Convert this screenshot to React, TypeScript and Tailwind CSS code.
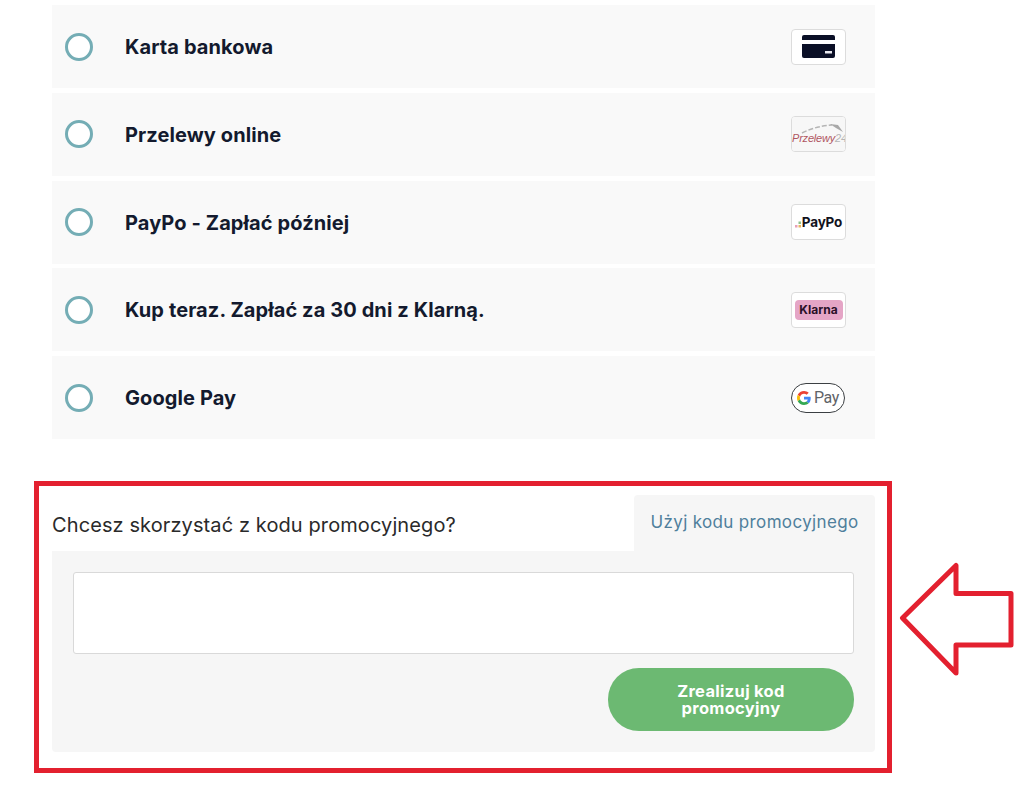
import type { ReactNode } from 'react'

const methods: { label: string; badge: ReactNode }[] = [
  { label: 'Karta bankowa', badge: <CardBadge /> },
  { label: 'Przelewy online', badge: <P24Badge /> },
  { label: 'PayPo - Zapłać później', badge: <PayPoBadge /> },
  { label: 'Kup teraz. Zapłać za 30 dni z Klarną.', badge: <KlarnaBadge /> },
  { label: 'Google Pay', badge: <GPayBadge /> },
]

function BadgeBox({ children }: { children: ReactNode }) {
  return (
    <div className="flex h-[36px] w-[55px] items-center justify-center overflow-hidden rounded-[4px] border border-[#dcdcdc] bg-white">
      {children}
    </div>
  )
}

function CardBadge() {
  return (
    <BadgeBox>
      <svg width="33" height="23" viewBox="0 0 33 23">
        <path d="M2 0h29a2 2 0 0 1 2 2v3H0V2a2 2 0 0 1 2-2z" fill="#0a0f26" />
        <path d="M0 9h33v12a2 2 0 0 1-2 2H2a2 2 0 0 1-2-2z" fill="#0a0f26" />
        <rect x="23" y="16" width="7" height="2.5" fill="#e8e8ee" />
      </svg>
    </BadgeBox>
  )
}

function P24Badge() {
  return (
    <BadgeBox>
      <div className="relative h-full w-full bg-[#f7f7f7]">
        <svg className="absolute left-[8px] top-[7px]" width="44" height="10" viewBox="0 0 44 10">
          <path d="M2 9 Q 16 2 32 1" fill="none" stroke="#b5b5b5" strokeWidth="1.5" strokeDasharray="5 2" />
          <path d="M30 0 L38 1 L43 8 L36 4z" fill="#a8a8a8" />
        </svg>
        <span className="absolute left-0 top-[13px] whitespace-nowrap font-['Liberation_Sans',sans-serif] text-[11px] leading-[16px] tracking-[-0.2px] text-[#b0555f] italic">
          Przelewy<span className="text-[#b5b5b5]">24</span>
        </span>
      </div>
    </BadgeBox>
  )
}

function PayPoBadge() {
  return (
    <BadgeBox>
      <div className="flex items-end">
        <svg width="7" height="8" viewBox="0 0 7 8" className="mb-[3px]">
          <rect x="0" y="5" width="2.5" height="2.5" fill="#e8a0b8" />
          <rect x="3.5" y="5" width="2.5" height="2.5" fill="#e8b860" />
          <rect x="3.5" y="1.5" width="2.5" height="2.5" fill="#8cc08c" />
        </svg>
        <span className="text-[13.5px] leading-[18px] font-bold tracking-[-0.2px] text-[#12121c]">PayPo</span>
      </div>
    </BadgeBox>
  )
}

function KlarnaBadge() {
  return (
    <BadgeBox>
      <div className="flex h-[20px] w-[48px] items-center justify-center rounded-[4px] bg-[#e5a5c6] text-[12px] font-bold text-[#2a1028]">
        Klarna
      </div>
    </BadgeBox>
  )
}

function GPayBadge() {
  return (
    <div className="mr-[1px] flex h-[30px] w-[54px] items-center justify-center gap-[3px] rounded-full border border-[#3c4043] bg-white">
      <svg width="14" height="14" viewBox="0 0 48 48">
        <path fill="#EA4335" d="M24 9.5c3.5 0 6.7 1.2 9.2 3.6l6.9-6.9C35.9 2.4 30.5 0 24 0 14.6 0 6.5 5.4 2.6 13.2l8 6.2C12.5 13.7 17.8 9.5 24 9.5z" />
        <path fill="#4285F4" d="M47 24.5c0-1.6-.1-3.1-.4-4.5H24v9h12.9c-.6 3-2.2 5.5-4.7 7.2l7.7 6c4.5-4.2 7.1-10.3 7.1-17.7z" />
        <path fill="#FBBC05" d="M10.6 28.6c-.5-1.4-.8-3-.8-4.6s.3-3.2.8-4.6l-8-6.2C.9 16.5 0 20.1 0 24s.9 7.5 2.6 10.8z" />
        <path fill="#34A853" d="M24 48c6.5 0 11.9-2.1 15.9-5.8l-7.7-6c-2.2 1.5-4.9 2.3-8.2 2.3-6.2 0-11.5-4.2-13.4-9.9l-8 6.2C6.5 42.6 14.6 48 24 48z" />
      </svg>
      <span className="font-['Roboto',sans-serif] text-[16px] leading-none tracking-[-0.4px] text-[#5f6368]">Pay</span>
    </div>
  )
}

export default function App() {
  return (
    <div className="min-h-[794px] bg-white pt-[5px] font-['Inter','Open_Sans',sans-serif]">
      <div className="ml-[52px] flex w-[823px] flex-col gap-[4.75px]">
        {methods.map(m => (
          <div key={m.label} className="flex h-[83px] items-center bg-[#f9f9f9] pr-[29px] pl-[13px]">
            <div className="h-[28px] w-[28px] rounded-full border-[3px] border-[#74adb5] bg-white" />
            <div className="mt-[1px] ml-[32px] flex-1 text-[20px] font-bold tracking-[0.1px] text-[#131a2e]">{m.label}</div>
            {m.badge}
          </div>
        ))}
      </div>

      <div className="mt-[42px] ml-[34px] flex items-start">
        <div className="h-[292px] w-[858px] border-[5px] border-[#e3202f] pt-[9px] pl-[13px]">
          <div className="w-[823px]">
            <div className="flex h-[56px] items-center justify-between">
              <div className="pt-[3px] text-[20px] tracking-[0.1px] text-[#2a2a2a]">Chcesz skorzystać z kodu promocyjnego?</div>
              <div className="flex h-full w-[241px] items-center justify-center rounded-t-[4px] bg-[#f6f6f6] text-[17px] tracking-[0.35px] text-[#4f7f9c]">
                Użyj kodu promocyjnego
              </div>
            </div>
            <div className="flex h-[201px] flex-col items-end rounded-b-[4px] bg-[#f6f6f6] px-[21px] pt-[21px]">
              <div className="h-[82px] w-full rounded-[3px] border border-[#d9d9d9] bg-white" />
              <button className="mt-[14px] h-[63px] w-[246px] rounded-[31px] bg-[#6cb972] px-[50px] text-[16.5px] leading-[17px] font-bold tracking-[0.3px] text-white">
                Zrealizuj kod promocyjny
              </button>
            </div>
          </div>
        </div>
        <svg className="mt-[79px] ml-[7px]" width="116" height="116" viewBox="0 0 116 116">
          <path d="M3.5 58 L57 5.5 L57 33.5 L112 33.5 L112 85 L57 85 L57 113 Z" fill="#fff" stroke="#e3202f" strokeWidth="5" strokeLinejoin="round" />
        </svg>
      </div>
    </div>
  )
}
